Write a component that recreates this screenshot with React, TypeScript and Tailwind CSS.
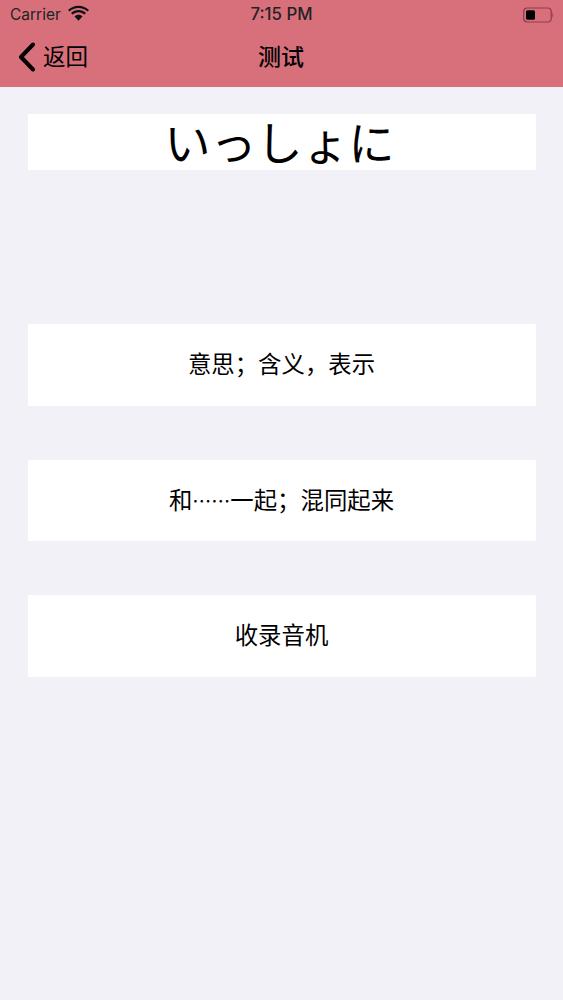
import React from 'react';

const cjk = "font-['Noto_Sans_CJK_SC','Noto_Sans_CJK_JP',sans-serif]";

const MeaningCard: React.FC<{ children: React.ReactNode }> = ({ children }) => (
  <div className={`flex h-[81.5px] items-center justify-center bg-white pb-[2px] pr-[1px] text-[23.4px] leading-none text-black ${cjk}`}>
    <span>{children}</span>
  </div>
);

export default function App() {
  return (
    <div className="flex min-h-[1000px] w-full flex-col bg-[#f2f1f7]">
      <header className="h-[87px] bg-[#d8707c] text-black">
        <div className="grid h-[29px] grid-cols-3 items-center pl-[10px] pr-[9px] font-['Inter',sans-serif]">
          <div className="flex items-center gap-[7px]">
            <span className="text-[15.5px] text-[#222]">Carrier</span>
            <svg width="21" height="16" viewBox="0 0 21 16" fill="#111" className="-mt-[3px]">
              <path d="M10.5 3C14 3 17.2 4.3 19.6 6.6L21 5.1C18.2 2.4 14.5.8 10.5.8S2.8 2.4 0 5.1l1.4 1.5C3.8 4.3 7 3 10.5 3z" />
              <path d="M10.5 7.2c2.3 0 4.4.9 6 2.4l1.5-1.5c-2-1.9-4.6-3-7.5-3S5 6.2 3 8.1l1.5 1.5c1.6-1.5 3.7-2.4 6-2.4z" />
              <path d="M10.5 9.8c-1.6 0-3 .6-4 1.6l4 4.3 4-4.3c-1-1-2.4-1.6-4-1.6z" />
            </svg>
          </div>
          <span className="pr-[1px] text-center text-[16.8px] font-medium text-[#222]">7:15 PM</span>
          <svg width="31" height="16" viewBox="0 0 31 16" fill="none" className="justify-self-end">
            <rect x="0.7" y="1" width="27.5" height="14" rx="3.5" stroke="#8a3d48" strokeWidth="1.2" />
            <rect x="3" y="3.2" width="9" height="9.6" rx="1.5" fill="#000" />
            <path d="M29.5 5.5c1 .4 1 4.6 0 5z" fill="#8a3d48" />
          </svg>
        </div>
        <div className="relative flex h-[56px] items-center justify-center pb-[3px]">
          <div className="absolute left-[18px] top-[13px] flex items-center gap-[8px]">
            <svg width="17" height="30" viewBox="0 0 17 30" fill="none">
              <path d="M15 2.5 3 15l12 12.5" stroke="#000" strokeWidth="4" strokeLinecap="round" strokeLinejoin="round" />
            </svg>
            <span className={`pb-[3px] text-[22.5px] leading-none ${cjk}`}>返回</span>
          </div>
          <span className={`pr-[1px] text-[23px] font-medium leading-none ${cjk}`}>测试</span>
        </div>
      </header>

      <main className="flex flex-col pl-[28px] pr-[27px] pt-[27px]">
        <div className={`flex h-[56px] items-center justify-center bg-white pb-[4px] pr-[5px] text-[46px] leading-none text-black ${cjk}`}>
          いっしょに
        </div>
        <div className="mt-[154px] flex flex-col gap-[54px]">
          <MeaningCard>意思；含义，表示</MeaningCard>
          <MeaningCard>
            和<span className="text-[19px]">……</span>一起；混同起来
          </MeaningCard>
          <MeaningCard>收录音机</MeaningCard>
        </div>
      </main>
    </div>
  );
}
